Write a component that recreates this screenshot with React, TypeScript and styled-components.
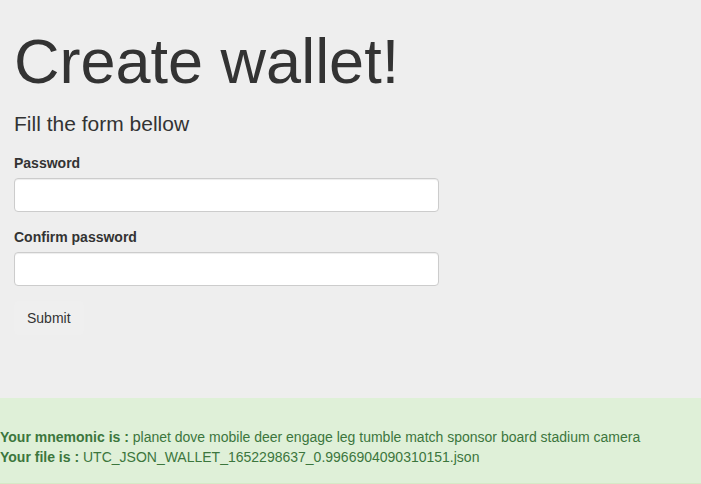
import React from "react";
import styled, { createGlobalStyle } from "styled-components";

const GlobalStyle = createGlobalStyle`
  html, body {
    margin: 0;
    padding: 0;
    background: #ffffff;
  }
  body {
    font-family: "Liberation Sans", Arial, Helvetica, sans-serif;
    font-size: 14px;
    line-height: 20px;
    color: #333333;
  }
  * { box-sizing: border-box; }
`;

const Page = styled.div`
  display: flex;
  flex-direction: column;
  min-height: 484px;
`;

const Jumbotron = styled.section`
  background: #eeeeee;
  padding: 27px 14px 63px;
`;

const Title = styled.h1`
  margin: 0;
  font-size: 63px;
  line-height: 69px;
  font-weight: 500;
  color: #333333;
`;

const Lead = styled.p`
  margin: 13px 0 15px;
  font-size: 21px;
  line-height: 29px;
  font-weight: 200;
  color: #333333;
`;

const Form = styled.form`
  display: flex;
  flex-direction: column;
  gap: 15px;
  width: 425px;
  align-items: flex-start;
`;

const Group = styled.div`
  display: flex;
  flex-direction: column;
  gap: 5px;
  width: 100%;
`;

const Label = styled.label`
  font-size: 14px;
  line-height: 20px;
  font-weight: 700;
  color: #333333;
`;

const Input = styled.input`
  width: 100%;
  height: 34px;
  padding: 6px 12px;
  border: 1px solid #cccccc;
  border-radius: 4px;
  background: #ffffff;
  box-shadow: inset 0 1px 1px rgba(0, 0, 0, 0.075);
  font-family: inherit;
  font-size: 14px;
  outline: none;
`;

const Button = styled.button`
  height: 34px;
  padding: 6px 12px;
  border: 1px solid transparent;
  border-radius: 4px;
  background: #efefef;
  font-family: inherit;
  font-size: 14px;
  line-height: 20px;
  color: #333333;
  cursor: pointer;
`;

const Alert = styled.div`
  flex: 1;
  background: #dff0d8;
  border-bottom: 1px solid #d6e9c6;
  color: #3c763d;
  padding: 29px 0 15px;
  font-size: 14px;
  line-height: 20px;
`;

const Line = styled.div`
  white-space: nowrap;
`;

const Strong = styled.b`
  font-weight: 700;
`;

export default function App() {
  return (
    <>
      <GlobalStyle />
      <Page>
        <Jumbotron>
          <Title>Create wallet!</Title>
          <Lead>Fill the form bellow</Lead>
          <Form onSubmit={(e) => e.preventDefault()}>
            <Group>
              <Label htmlFor="pw">Password</Label>
              <Input id="pw" type="password" />
            </Group>
            <Group>
              <Label htmlFor="pw2">Confirm password</Label>
              <Input id="pw2" type="password" />
            </Group>
            <Button type="submit">Submit</Button>
          </Form>
        </Jumbotron>
        <Alert>
          <Line>
            <Strong>Your mnemonic is :</Strong> planet dove mobile deer engage leg tumble match sponsor board stadium camera
          </Line>
          <Line>
            <Strong>Your file is :</Strong> UTC_JSON_WALLET_1652298637_0.9966904090310151.json
          </Line>
        </Alert>
      </Page>
    </>
  );
}
